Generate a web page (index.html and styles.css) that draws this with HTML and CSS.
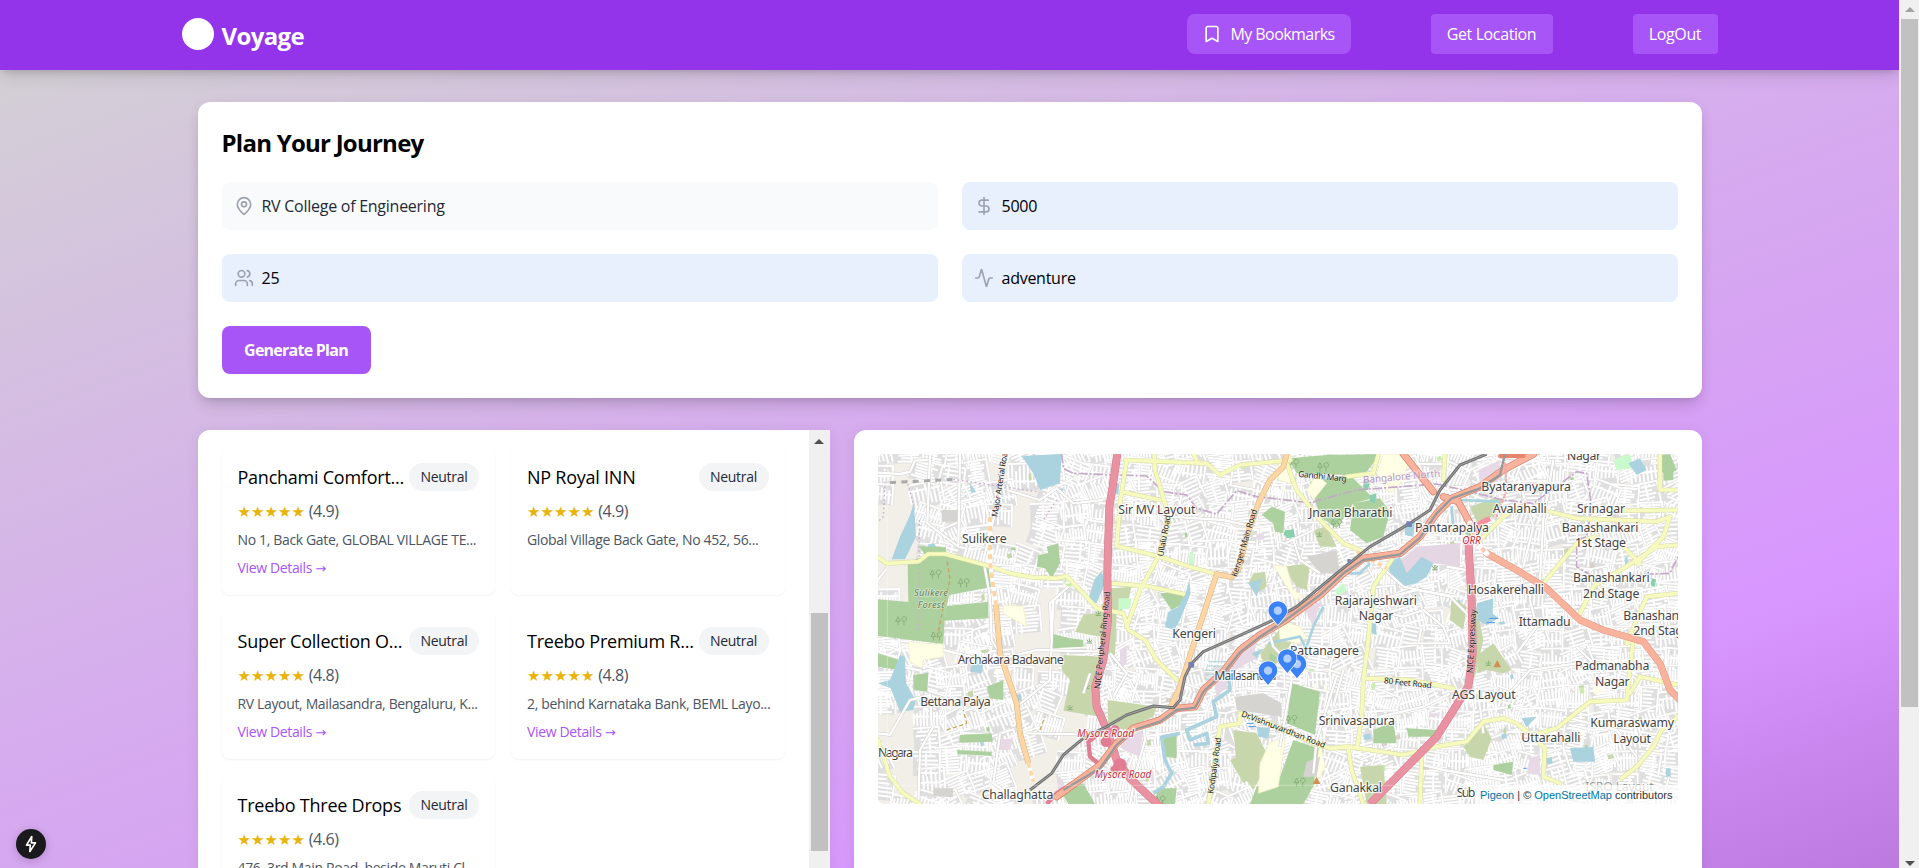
FILE: index.html
```html
<!DOCTYPE html>
<html lang="en">
<head>
<meta charset="utf-8">
<title>Voyage</title>
<link rel="stylesheet" href="styles.css">
</head>
<body>
<div class="window">
  <div class="page">
    <header class="header">
      <div class="header-inner">
        <div class="brand"><span class="brand-dot"></span><span class="brand-name">Voyage</span></div>
        <nav class="nav">
          <button class="nav-btn nav-btn-bookmarks">
            <svg class="icon" viewBox="0 0 24 24"><path d="m19 21-7-4-7 4V5a2 2 0 0 1 2-2h10a2 2 0 0 1 2 2z"/></svg>
            <span class="t-bookmarks">My Bookmarks</span>
          </button>
          <button class="nav-btn nav-btn-location">Get Location</button>
          <button class="nav-btn nav-btn-logout">LogOut</button>
        </nav>
      </div>
    </header>
    <main class="main">
      <section class="card planner">
        <h2 class="planner-title">Plan Your Journey</h2>
        <div class="fields">
          <div class="field field-plain">
            <svg class="icon" viewBox="0 0 24 24"><path d="M20 10c0 4.993-5.539 10.193-7.399 11.799a1 1 0 0 1-1.202 0C9.539 20.193 4 14.993 4 10a8 8 0 0 1 16 0"/><circle cx="12" cy="10" r="3"/></svg>
            <span>RV College of Engineering</span>
          </div>
          <div class="field">
            <svg class="icon" viewBox="0 0 24 24"><path d="M12 2v20M17 5H9.5a3.5 3.5 0 0 0 0 7h5a3.5 3.5 0 0 1 0 7H6"/></svg>
            <span>5000</span>
          </div>
          <div class="field">
            <svg class="icon" viewBox="0 0 24 24"><path d="M16 21v-2a4 4 0 0 0-4-4H6a4 4 0 0 0-4 4v2"/><circle cx="9" cy="7" r="4"/><path d="M22 21v-2a4 4 0 0 0-3-3.87M16 3.13a4 4 0 0 1 0 7.75"/></svg>
            <span>25</span>
          </div>
          <div class="field">
            <svg class="icon" viewBox="0 0 24 24"><path d="M22 12h-2.48a2 2 0 0 0-1.93 1.46l-2.35 8.36a.25.25 0 0 1-.48 0L9.24 2.18a.25.25 0 0 0-.48 0l-2.35 8.36A2 2 0 0 1 4.49 12H2"/></svg>
            <span>adventure</span>
          </div>
        </div>
        <button class="generate">Generate Plan</button>
      </section>

      <div class="results">
        <section class="places-panel">
          <div class="places">
            <article class="place">
              <div class="place-head"><h3>Panchami Comfort...</h3><span class="badge">Neutral</span></div>
              <p class="rating"><span class="stars">★★★★★</span> (4.9)</p>
              <p class="address">No 1, Back Gate, GLOBAL VILLAGE TE...</p>
              <a class="details">View Details <span class="go">→</span></a>
            </article>
            <article class="place">
              <div class="place-head"><h3>NP Royal INN</h3><span class="badge">Neutral</span></div>
              <p class="rating"><span class="stars">★★★★★</span> (4.9)</p>
              <p class="address">Global Village Back Gate, No 452, 56...</p>
            </article>
            <article class="place">
              <div class="place-head"><h3>Super Collection O...</h3><span class="badge">Neutral</span></div>
              <p class="rating"><span class="stars">★★★★★</span> (4.8)</p>
              <p class="address">RV Layout, Mailasandra, Bengaluru, K...</p>
              <a class="details">View Details <span class="go">→</span></a>
            </article>
            <article class="place">
              <div class="place-head"><h3>Treebo Premium R...</h3><span class="badge">Neutral</span></div>
              <p class="rating"><span class="stars">★★★★★</span> (4.8)</p>
              <p class="address">2, behind Karnataka Bank, BEML Layo...</p>
              <a class="details">View Details <span class="go">→</span></a>
            </article>
            <article class="place">
              <div class="place-head"><h3>Treebo Three Drops</h3><span class="badge">Neutral</span></div>
              <p class="rating"><span class="stars">★★★★★</span> (4.6)</p>
              <p class="address">476, 3rd Main Road, beside Maruti Cl...</p>
              <a class="details">View Details <span class="go">→</span></a>
            </article>
          </div>
          <div class="scrollbar scrollbar-inner">
            <span class="arrow arrow-up"></span><span class="thumb thumb-inner"></span>
          </div>
        </section>

        <section class="map-panel">
          <div class="map">
            <svg class="map-svg" viewBox="24 42 2400 1050">
              <rect x="24" y="42" width="2400" height="1050" fill="#f2efe9"/>
              <g id="blocks"></g>

              <!-- scrub and grass -->
              <g fill="#c8d7ab">
                <path d="M725 445L785 440L770 500L735 525L690 505ZM700 515L740 525L735 645L695 640L690 590L615 575L640 525ZM580 645L700 650L670 770L690 830L580 812L600 720L575 690Z"/>
                <path d="M712 780L860 800L850 830L760 870L715 850ZM1090 870L1160 880L1200 960L1150 1050L1100 980ZM1235 560L1275 590L1240 650L1190 700L1170 640Z"/>
                <path d="M1240 380L1320 370L1310 450L1280 440ZM1330 270L1370 260L1400 320L1350 320ZM1800 200L1870 175L1900 180L1870 230L1820 245ZM1745 470L1790 500L1780 570L1740 540Z"/>
                <path d="M1830 640L1870 610L1925 690L1900 700L1850 690L1820 700ZM1820 500L1840 600L1820 690L1805 740ZM1780 920L1840 850L1865 895L1840 960L1800 950ZM1470 980L1540 975L1550 1092L1490 1092Z"/>
                <path d="M1150 400L1185 395L1190 440L1160 460L1135 430ZM1080 960L1130 940L1150 1010L1120 1030Z"/>
              </g>
              <!-- forests and parks -->
              <g fill="#add19e">
                <path d="M147 318L228 322L230 345L370 385L370 440L238 465L225 520L220 612L24 588L24 478L115 486L113 370L165 345Z"/>
                <path d="M230 498L355 485L355 535L220 542ZM24 640L90 660L85 690L24 680ZM130 705L175 698L172 755L130 750ZM540 580L600 595L640 600L640 620L545 625ZM270 885L365 880L368 905L268 908ZM262 930L365 935L365 948L262 942Z"/>
                <path d="M570 1050L640 1030L675 1092L595 1092ZM870 460L940 455L940 490L905 510ZM880 890L920 885L920 955L885 950ZM350 740L400 720L400 780L360 775ZM530 320L565 310L570 370L545 415L525 385L500 380L505 345L535 340Z"/>
                <path d="M1175 225L1205 200L1245 215L1240 280L1215 275L1210 250ZM1255 55L1370 45L1530 42L1490 95L1430 105L1280 100ZM1320 125L1440 105L1510 175L1450 190L1400 265L1350 230ZM1450 190L1530 175L1560 215L1540 290L1490 310L1440 270Z"/>
                <path d="M1265 730L1350 755L1335 885L1250 850ZM1160 1040L1230 1010L1270 900L1360 930L1340 1020L1300 1092L1140 1092ZM1510 870L1570 845L1580 910L1510 910ZM1610 865L1705 870L1705 890L1615 890ZM1870 975L1930 965L1925 1005L1870 990ZM860 1045L920 1045L915 1092L860 1092ZM1200 640L1220 650L1210 700L1195 680Z"/>
                <path d="M2368 45L2400 42L2420 90L2390 110L2370 90ZM2380 90L2410 90L2410 120L2380 122Z"/>
              </g>
              <g fill="#c8facc">
                <path d="M745 475L785 475L780 505L745 510ZM2230 60L2280 42L2290 85L2240 90ZM960 335L970 335L970 375L955 370ZM2345 420L2355 420L2355 440L2345 440ZM1395 450L1420 430L1430 450L1400 470Z"/>
              </g>
              <g fill="#88cfae">
                <path d="M1245 280L1270 265L1275 290L1250 295ZM1480 120L1500 120L1495 150L1480 150ZM1500 165L1520 160L1515 190L1500 185ZM1245 270L1265 270L1265 295L1240 285ZM2345 415L2358 418L2355 440L2342 436Z"/>
              </g>
              <g fill="#ffffe5" stroke="#f1edc0" stroke-width="2">
                <path d="M115 605L175 612L220 612L220 650L160 660L155 685L120 665ZM400 495L460 500L470 560L400 520ZM1225 60L1262 45L1262 130L1225 120ZM1225 540L1290 560L1310 590L1290 610L1230 600ZM1200 905L1245 900L1225 1040L1165 1060L1170 970ZM1350 900L1365 980L1330 1050ZM1210 375L1250 380L1270 450L1300 470L1275 480ZM1370 130L1330 180L1310 150L1340 105ZM1540 42L1620 42L1600 120L1560 160L1520 100Z"/>
              </g>
              <g fill="#d9d0e3">
                <path d="M1640 320L1770 310L1770 380L1690 370L1640 430L1560 410L1580 370Z" fill="#e4d6e3"/>
                <path d="M1825 90L1890 60L1890 120L1830 135ZM1090 650L1130 620L1160 600L1150 660L1080 700ZM1030 720L1070 700L1070 740L1040 770ZM380 900L430 895L420 930L380 930ZM740 900L820 870L810 950L760 930ZM1980 955L2010 945L2010 1005L1970 1000ZM1300 500L1350 490L1330 560ZM750 630L770 615L770 670L750 690Z" fill="#e8d9e6"/>
                <path d="M1095 770L1180 760L1235 790L1235 830L1100 810ZM1310 965L1350 950L1340 1010L1300 1010ZM190 1045L250 1045L248 1072L190 1068ZM1310 350L1400 330L1410 400L1350 400ZM215 210L270 210L270 245L215 245Z" fill="#d6d4d0"/>
              </g>
              <!-- water -->
              <g fill="#aad3df">
                <path d="M455 48L575 42L570 130L510 150L490 100ZM132 190L138 290L105 358L65 358L90 290L118 230ZM90 645L105 650L108 730L137 780L130 810L90 815L62 745L24 730L60 720ZM695 392L705 430L680 490L655 480L672 420ZM958 420L962 460L930 540L912 570L885 560L895 515L925 500L948 455ZM1135 430L1178 415L1160 470ZM305 675L340 670L335 700L300 695ZM300 130L318 155L302 158Z"/>
                <path d="M1820 490L1870 475L1868 520L1885 535L1850 555L1820 540ZM2100 925L2170 920L2175 965L2110 965ZM1955 835L2000 830L1970 862ZM2275 70L2310 55L2330 90L2300 105ZM1605 250L1635 245L1630 290L1605 285ZM1555 370L1590 350L1610 400L1655 350L1690 370L1670 410L1640 430L1595 440L1560 410ZM1160 860L1200 865L1195 895L1165 890ZM1500 550L1518 550L1520 585L1505 580ZM740 130L748 130L745 165L737 160ZM1145 640L1180 625L1160 655ZM2388 985L2402 985L2402 1010L2388 1010Z"/>
              </g>
              <g fill="none" stroke="#aad3df" stroke-width="11" stroke-linejoin="round">
                <path d="M1075 690L1080 750L1030 785L1040 830L950 870L960 900L1010 880L1015 910L970 915M930 880L875 892L885 960L905 1000L880 1040L850 1060"/>
                <path d="M1195 610L1290 590L1310 630M1310 620L1330 560L1360 500M1400 400L1470 400L1500 370M1745 200L1750 260M1770 180L1890 185" stroke-width="8"/>
                <path d="M1015 665H1095M1010 678H1090M1005 691H1080M1005 704H1075M1005 717H1060" stroke-width="3"/>
                <path d="M1858 535H1885M1850 548H1875M1130 850H1150M1135 860H1158M1960 985H1970" stroke="#4c94e8" stroke-width="3"/>
              </g>
              <g id="orchards" fill="none" stroke="#87b078" stroke-width="3"></g>

              <!-- minor connecting roads -->
              <g class="casing"><path id="minor" d="M24 98L90 102L120 95L135 62L175 60M270 42L265 320M180 45L172 250L265 320M375 220L340 360L360 470L365 600L390 640M410 150L510 180L560 145L610 190L700 180M24 420L50 385M220 630L300 650L380 660L500 630L700 635M24 880L60 885L120 780L180 765L185 860M145 1092L150 930L190 860M440 800L540 720L550 480M390 880L370 1030L460 1092M470 880L720 885M820 850L825 900L800 990L780 1092M640 760L660 700M545 600L540 490L595 440M720 640L770 700L730 770M900 230L1060 240L1150 260M1180 520L1210 620L1230 640M1245 310L1330 270L1330 250M1270 300L1290 360L1350 400M1500 330L1545 390L1600 440L1740 470L1790 520M1480 500L1600 530L1660 510L1720 560L1740 610L1620 610M1560 470L1640 450L1760 470M1400 710L1340 900L1330 1000M1265 720L1230 920M1390 800L1420 690M1730 380L1790 390L1800 460M1940 640L2000 560L1980 480M1900 780L1980 690L2120 670M2080 830L2240 870L2300 950M1600 960L1720 990L1900 1020M1830 800L1840 880M1950 130L1990 260L1960 380M2050 60L2020 240L2010 420M2120 620L2200 700M1490 840L1660 800L1740 760"/></g>
              <use href="#minor" fill="none" stroke="#fff" stroke-width="7"/>

              <!-- administrative boundary and tracks -->
              <path d="M575 42L580 85L610 100L830 108L880 155L950 165L980 205L1040 222L1100 152L1160 170L1320 188L1460 150L1700 132L1780 150L1900 180L1990 190L2120 95L2150 100L2165 200L2150 290L2120 300L2120 380L2170 410L2400 400L2424 350" fill="none" stroke="#c5a9c9" stroke-width="5" stroke-dasharray="28 6 6 6"/>
              <path d="M45 125L40 230L24 245M110 120L130 190M148 240L145 570M250 118L500 155M560 180L520 240" fill="none" stroke="#c9b0cc" stroke-width="4" stroke-dasharray="5 8"/>
              <path d="M232 365L240 420L220 500L200 600M230 870L290 850L280 810M510 870L525 830" fill="none" stroke="#c9a25d" stroke-width="4" stroke-dasharray="12 8"/>

              <!-- secondary roads -->
              <defs><path id="secondary" d="M24 352L50 370L145 365L175 342L225 342L370 382L420 400L490 412L560 415L590 408L640 460L680 505L760 520L775 570L825 600L860 660L920 720M770 60L750 190L740 318L870 350L960 380L1045 404M765 60L1010 70L1050 105L1110 75L1262 60M852 42L855 90L885 190L895 250L865 350L810 450L770 560M725 430L830 438L940 462M755 155L870 180M1250 70L1280 150L1350 240L1420 310L1480 335M970 42L980 60M1015 1092L1050 860L1110 850L1110 820M1110 820L1200 850L1330 910L1380 925L1435 920L1600 945L1700 920L1790 905L1840 845L1900 835L1940 850L1990 890L2025 925L2020 1010L2070 1030M1435 925L1445 990L1480 1092M1655 950L1650 1092M1990 885L2060 865L2160 785L2270 780L2290 600L2270 610M1565 360L1510 440L1495 600L1480 720L1475 830L1462 920M1490 715L1620 720L1750 745M2020 430L2120 310L2175 290M2130 520L2170 440L2300 360L2360 320L2424 315M2040 215L2120 235L2360 245L2400 230M2260 212L2424 210M2310 370L2260 320M2370 42L2370 150L2424 150M2400 230L2380 290L2300 370M2270 610L2330 470L2424 460M2280 760L2310 710L2424 735M2375 870L2350 920L2300 980L2255 1015M2375 870L2424 830M1525 42L1510 100L1430 110M1725 42L1720 120M24 900L60 1010L100 1060L150 1092M1830 300L1900 230L1950 200"/></defs>
              <g fill="none" stroke-linejoin="round" stroke-linecap="round">
                <use href="#secondary" stroke="#d6dba0" stroke-width="14"/>
                <use href="#secondary" stroke="#f7fabf" stroke-width="11"/>
              </g>
              <path d="M360 230L360 370L378 495" fill="none" stroke="#fff" stroke-width="13"/>
              <path d="M360 230L360 370L378 495" fill="none" stroke="#fcd6a4" stroke-width="12" stroke-dasharray="16 12"/>
              <g fill="none" stroke-linejoin="round">
                <path d="M378 495L390 640L440 790L450 880L475 970M1250 42L1240 80L1200 120L1165 190L1130 290L1105 390L1085 412L1040 402L985 570L930 740L900 805" stroke="#d9b27c" stroke-width="17"/>
                <path d="M378 495L390 640L440 790L450 880L475 970M1250 42L1240 80L1200 120L1165 190L1130 290L1105 390L1085 412L1040 402L985 570L930 740L900 805" stroke="#fcd6a4" stroke-width="14"/>
                <path d="M475 970L490 1025M1460 335L1550 385" stroke="#fff" stroke-width="12"/>
                <path d="M475 970L490 1025M1460 335L1550 385" stroke="#fcd6a4" stroke-width="11" stroke-dasharray="14 10"/>
              </g>

              <!-- motorways -->
              <g fill="none" stroke-linejoin="round">
                <path d="M742 42L728 140L718 200L712 400L714 540L700 660L676 740L680 800L715 880L740 960L780 1015L870 1100M1795 300L1805 480L1808 640L1795 740L1700 890L1500 1092" stroke="#d97a8d" stroke-width="24"/>
                <path d="M742 42L728 140L718 200L712 400L714 540L700 660L676 740L680 800L715 880L740 960L780 1015L870 1100M1795 300L1805 480L1808 640L1795 740L1700 890L1500 1092" stroke="#e892a2" stroke-width="21"/>
                <path d="M700 870L655 905L660 950L690 975L740 910M530 1092L560 1060L700 970" stroke="#e07d92" stroke-width="13"/>
                <path d="M1795 310L1830 250L1860 235" stroke="#f3909c" stroke-width="16"/>
              </g>
              <g fill="#e27c92"><circle cx="708" cy="905" r="16"/><circle cx="750" cy="975" r="20"/><circle cx="735" cy="870" r="14"/><circle cx="735" cy="990" r="14"/></g>

              <!-- trunk roads -->
              <g fill="none" stroke-linejoin="round" stroke-linecap="round">
                <path d="M560 1070L690 975L740 910L790 865L870 840L920 805L975 800L1000 750L1060 695L1110 630L1170 585L1240 545L1350 465L1420 400L1480 355L1590 340L1650 290L1700 220L1745 175L1830 140L1900 90L1990 42M1600 42L1690 155M1720 170L1765 185L1800 250" stroke="#d4806a" stroke-width="22"/>
                <path d="M1850 340L1940 390L2030 445L2130 540L2200 570L2320 605L2370 670L2400 750L2440 790" stroke="#e2957f" stroke-width="21"/>
                <path d="M560 1070L690 975L740 910L790 865L870 840L920 805L975 800L1000 750L1060 695L1110 630L1170 585L1240 545L1350 465L1420 400L1480 355L1590 340L1650 290L1700 220L1745 175L1830 140L1900 90L1990 42M1600 42L1690 155M1720 170L1765 185L1800 250M1850 340L1940 390L2030 445L2130 540L2200 570L2320 605L2370 670L2400 750L2440 790" stroke="#f9b29c" stroke-width="18"/>
                <path d="M1800 250L1820 310L1850 340" stroke="#fff" stroke-width="16"/>
                <path d="M1800 250L1820 310L1850 340" stroke="#fcc9b8" stroke-width="12" stroke-dasharray="14 14" stroke-linecap="butt"/>
                <path d="M1905 70L1910 150L1880 230" stroke="#f6a9a9" stroke-width="6" stroke-dasharray="8 8"/>
                <path d="M1890 48L1960 48" stroke="#e5866c" stroke-width="12"/>
              </g>
              <!-- railways -->
              <g fill="none" stroke-linejoin="round">
                <path d="M580 1050L690 985L740 915L790 870L870 845L920 810L975 803L1000 755L1060 700L1110 637L1170 590L1240 545L1350 465L1420 400L1480 360L1590 343L1650 293L1700 220L1745 175L1830 145L1890 105L1905 42" stroke="#999" stroke-width="7"/>
                <path d="M480 1050L545 1000L580 945L640 895L710 860L770 825L850 798L910 803L930 780L945 710L965 670L1000 635L1090 595L1200 545L1280 500L1400 400L1500 320L1620 250L1680 210L1710 150L1770 75L1850 42" stroke="#707070" stroke-width="9"/>
                <path d="M480 1050L545 1000L580 945L640 895L710 860L770 825L850 798L910 803L930 780L945 710L965 670L1000 635L1090 595L1200 545L1280 500L1400 400L1500 320L1620 250L1680 210L1710 150L1770 75L1850 42" stroke="#a5a5a5" stroke-width="3"/>
                <path d="M60 128L250 118" stroke="#aaa" stroke-width="9" stroke-dasharray="18 16"/>
              </g>
              <g fill="#7981b0"><rect x="955" y="666" width="17" height="17"/><rect x="1609" y="244" width="17" height="17"/><rect x="1432" y="357" width="10" height="10"/></g>
              <g fill="#d08f55"><path d="M1870 682L1882 660L1893 682ZM1328 1032L1340 1010L1351 1032Z"/></g>

              <!-- place names -->
              <g class="lbl">
                <text x="276" y="310" textLength="134">Sulikere</text>
                <text x="745" y="221" textLength="231">Sir MV Layout</text>
                <text x="263" y="671" textLength="318">Archakara Badavane</text>
                <text x="151" y="798" textLength="211">Bettana Palya</text>
                <text x="24" y="950" textLength="105">Nagara</text>
                <text x="335" y="1076" textLength="215">Challaghatta</text>
                <text x="907" y="594" textLength="131">Kengeri</text>
                <text x="1033" y="720" textLength="186">Mailasandra</text>
                <text x="1317" y="230" textLength="250">Jnana Bharathi</text>
                <text x="1635" y="276" textLength="222">Pantarapalya</text>
                <text x="1834" y="152" textLength="269">Byataranyapura</text>
                <text x="1868" y="220" textLength="162">Avalahalli</text>
                <text x="2121" y="219" textLength="144">Srinagar</text>
                <text x="2091" y="60" textLength="102">Nagar</text>
                <text x="2075" y="276" textLength="230">Banashankari</text>
                <text x="2115" y="322" textLength="153">1st Stage</text>
                <text x="2109" y="427" textLength="230">Banashankari</text>
                <text x="2139" y="473" textLength="169">2nd Stage</text>
                <text x="2260" y="540" textLength="230">Banashankari</text>
                <text x="2290" y="586" textLength="169">2nd Stage</text>
                <text x="1394" y="494" textLength="247">Rajarajeshwari</text>
                <text x="1466" y="540" textLength="104">Nagar</text>
                <text x="1793" y="463" textLength="229">Hosakerehalli</text>
                <text x="1946" y="557" textLength="156">Ittamadu</text>
                <text x="1260" y="646" textLength="207">Pattanagere</text>
                <text x="2115" y="691" textLength="223">Padmanabha</text>
                <text x="2175" y="737" textLength="104">Nagar</text>
                <text x="1746" y="777" textLength="191">AGS Layout</text>
                <text x="1346" y="856" textLength="229">Srinivasapura</text>
                <text x="1954" y="906" textLength="177">Uttarahalli</text>
                <text x="2161" y="862" textLength="251">Kumaraswamy</text>
                <text x="2230" y="908" textLength="113">Layout</text>
                <text x="1380" y="1056" textLength="156">Ganakkal</text>
                <text x="1760" y="1070" textLength="56">Sub</text>
                <text x="2146" y="1052" textLength="205" class="faint">ISRO Layout</text>
              </g>
              <g class="lbl forest"><text x="132" y="467" textLength="102">Sulikere</text><text x="143" y="503" textLength="80">Forest</text></g>
              <g class="lbl red">
                <text x="622" y="891" textLength="170">Mysore Road</text><text x="674" y="1015" textLength="170">Mysore Road</text><text x="1777" y="312" textLength="55">ORR</text>
              </g>
              <g class="lbl road">
                <text transform="translate(382 232) rotate(-81)" textLength="210">Major Arterial Road</text>
                <text transform="translate(690 748) rotate(-84)" textLength="294">NICE Peripheral Ring Road</text>
                <text transform="translate(880 350) rotate(-80)" textLength="125">Ullalu Road</text>
                <text transform="translate(1100 412) rotate(-73)" textLength="210">Kengeri Main Road</text>
                <text transform="translate(1030 1062) rotate(-82)" textLength="170">Kodipalya Road</text>
                <text transform="translate(1112 828) rotate(21)" textLength="268">Dr.Vishnuvardhan Road</text>
                <text transform="translate(1284 110) rotate(6)" textLength="146">Gandhi Marg</text>
                <text transform="translate(1541 730) rotate(6)" textLength="144">80 Feet Road</text>
                <text transform="translate(1808 700) rotate(-87)" textLength="192">NICE Expressway</text>
              </g>
              <text class="lbl region" transform="translate(1480 130) rotate(-5)" textLength="232">Bangalore North</text>
              <g fill="none" stroke="#fff" stroke-opacity=".45" stroke-width="2"><path d="M52 42V1092M24 1036H2424"/></g>

              <!-- markers -->
              <defs><g id="pin"><path d="M0 42L-20 18A28 28 0 1 1 20 18Z" fill="#3b82f6" stroke="#fff" stroke-width="4" paint-order="stroke"/><circle cx="0" cy="-1" r="12.500" fill="#b3cffb"/></g></defs>
              <use href="#pin" x="1281" y="673"/>
              <use href="#pin" x="1252" y="657"/>
              <use href="#pin" x="1194" y="693"/>
              <use href="#pin" x="1223.500" y="513"/>
            </svg>
            <div class="attribution"><span class="link">Pigeon</span> | © <span class="link">OpenStreetMap</span> contributors</div>
          </div>
        </section>
      </div>
    </main>
    <div class="dev-badge">
      <svg viewBox="0 0 24 24"><path d="M13 2L6 13.500H11L10.500 22L18 10.500H12.500Z"/></svg>
    </div>
  </div>
  <div class="scrollbar scrollbar-page">
    <span class="arrow arrow-up arrow-dim"></span><span class="thumb thumb-page"></span><span class="arrow arrow-down"></span>
  </div>
</div>
<script src="streets.js"></script>
</body>
</html>
```
FILE: styles.css
```css
* { box-sizing: border-box; margin: 0; padding: 0; }
body {
  font-family: "Segoe UI", "Open Sans", "Noto Sans", sans-serif;
  font-size: 16px;
  line-height: 24px;
  letter-spacing: -0.3px;
  color: #000;
  overflow: hidden;
}
button { font: inherit; letter-spacing: inherit; border: 0; white-space: nowrap; }
.window { display: flex; width: 1919px; height: 868px; overflow: hidden; }
.page {
  flex: 1;
  position: relative;
  overflow: hidden;
  background-image: linear-gradient(160deg, #d3d3d3 0%, #d6acee 43%, #d6a3f3 56%, #d896ff 72%, #ac6acd 100%);
  background-size: 100% 1047px;
}
.icon { width: 20px; height: 20px; fill: none; stroke: currentColor; stroke-width: 2; stroke-linecap: round; stroke-linejoin: round; flex: none; }

.header {
  height: 70px;
  background: #9333ea;
  color: #fff;
  position: relative;
  box-shadow: 0 10px 15px -3px rgba(0,0,0,.1), 0 4px 6px -4px rgba(0,0,0,.1), 0 2px 8px rgba(0,0,0,.08);
}
.header-inner { width: 1536px; height: 68px; margin: 0 auto; display: flex; justify-content: space-between; align-items: center; }
.brand { display: flex; align-items: center; gap: 8px; }
.brand-dot { width: 32px; height: 32px; border-radius: 50%; background: #fff; }
.brand-name { font-size: 24px; line-height: 32px; font-weight: 700; padding-top: 3px; letter-spacing: -.65px; }
.nav { display: flex; gap: 80px; }
.nav-btn { height: 40px; background: #a855f7; color: #fff; border-radius: 4px; display: flex; align-items: center; justify-content: center; letter-spacing: -.38px; }
.nav-btn-bookmarks { width: 164px; border-radius: 8px; gap: 8px; letter-spacing: -.55px; }
.nav-btn-location { width: 122px; }
.nav-btn-logout { width: 85px; }

.main { width: 1504px; margin: 32px auto 0; }
.card { background: #fff; border-radius: 12px; }
.planner { padding: 24px; height: 296px; box-shadow: 0 10px 15px -3px rgba(0,0,0,.12), 0 4px 6px -4px rgba(0,0,0,.12), 0 2px 14px rgba(0,0,0,.05); }
.planner-title { font-size: 24px; line-height: 34px; font-weight: 700; margin-bottom: 22px; letter-spacing: -.75px; }
.fields { display: grid; grid-template-columns: 1fr 1fr; gap: 24px; }
.field { height: 48px; border-radius: 8px; background: #e8f0fe; padding: 0 12px; display: flex; align-items: center; gap: 8px; letter-spacing: -.26px; }
.field-plain { background: #f9fafb; color: #1f2937; }
.field .icon { color: #9ca3af; }
.generate { margin-top: 24px; width: 149px; height: 48px; background: #a855f7; color: #fff; border-radius: 8px; font-weight: 700; letter-spacing: -.75px; }

.results { display: grid; grid-template-columns: 632px 848px; gap: 24px; margin-top: 32px; height: 600px; }
.places-panel { display: flex; background: #fff; border-radius: 12px 0 0 12px; overflow: hidden; box-shadow: 0 2px 14px rgba(0,0,0,.07); }
.places { width: 611px; padding: 17px 24px; display: grid; grid-template-columns: 1fr 1fr; grid-auto-rows: 148px; gap: 16px; align-content: start; }
.place { padding: 16px; border-radius: 8px; box-shadow: 0 1px 2px rgba(0,0,0,.06); display: flex; flex-direction: column; gap: 8px; white-space: nowrap; min-width: 0; }
.place-head { display: flex; justify-content: space-between; align-items: center; height: 28px; }
.place h3 { font-size: 18px; line-height: 28px; font-weight: 500; letter-spacing: -.24px; }
.badge { width: 70px; height: 28px; border-radius: 14px; background: #f3f4f6; color: #1f2937; font-size: 14px; line-height: 28px; text-align: center; }
.rating { height: 24px; color: #4b5563; letter-spacing: -.45px; }
.stars { font-family: "DejaVu Sans", sans-serif; font-size: 15px; letter-spacing: .05px; color: #eab308; }
.address, .details { font-size: 14px; line-height: 18px; height: 20px; color: #4b5563; letter-spacing: -.35px; }
.details { color: #a855f7; }
.go { font: 13px/18px "DejaVu Sans", sans-serif; }

.map-panel { background: #fff; border-radius: 12px; padding: 24px; box-shadow: 0 2px 14px rgba(0,0,0,.07); }
.map { width: 800px; height: 350px; border-radius: 6px; overflow: hidden; position: relative; }
.map-svg { display: block; width: 800px; height: 350px; }
.casing { fill: none; stroke: #cfcdca; stroke-width: 10; }
.lbl { font-family: "Noto Sans", sans-serif; font-size: 37px; letter-spacing: 0; fill: #444; stroke: #fff; stroke-opacity: .75; stroke-width: 7; paint-order: stroke; stroke-linejoin: round; }
.faint { opacity: .5; }
.forest { font-size: 28px; font-style: italic; fill: #5f7d59; stroke-opacity: .5; stroke-width: 4; }
.red { font-size: 30px; font-style: italic; fill: #c0303f; }
.road { font-size: 25px; fill: #222; stroke-width: 3; stroke-opacity: .4; }
.region { font-size: 30px; fill: #b793bb; stroke-opacity: .4; }
.attribution {
  position: absolute; right: 0; bottom: 0; height: 19px; padding: 3px 5px 0;
  background: rgba(255,255,255,.7); font: 11px/14px "Liberation Sans", Arial, sans-serif; letter-spacing: 0; color: #333; white-space: nowrap;
}
.link { color: #0078a8; }

.scrollbar { background: #f0f0f0; display: flex; flex-direction: column; align-items: center; flex: none; }
.scrollbar-inner { width: 21px; padding: 9px 0 0; }
.scrollbar-page { width: 20px; height: 868px; padding: 7px 0 2px 1px; }
.arrow { width: 0; height: 0; border-left: 5px solid transparent; border-right: 5px solid transparent; }
.arrow-up { border-bottom: 5px solid #505050; }
.arrow-dim { border-bottom-color: #a3a3a3; }
.arrow-down { border-top: 5px solid #505050; margin-top: auto; }
.thumb { width: 17px; background: #c1c1c1; }
.thumb-inner { height: 238px; margin-top: 169px; }
.thumb-page { height: 688px; margin-top: 7px; }

.dev-badge { position: absolute; left: 16px; top: 829px; width: 30px; height: 30px; border-radius: 50%; background: #1a1a1c; display: flex; align-items: center; justify-content: center; box-shadow: 0 2px 10px rgba(0,0,0,.18); }
.dev-badge svg { width: 18px; height: 18px; fill: none; stroke: #fff; stroke-width: 2.200; stroke-linejoin: round; }
```
FILE: streets.js
```js
// Fills the map's built-up areas with small street grids.
const NS = "http://www.w3.org/2000/svg";
let seed = 4211;
const rnd = () => (seed = (seed * 16807) % 2147483647) / 2147483647;
const add = (parent, tag, attrs) => {
  const el = document.createElementNS(NS, tag);
  for (const k in attrs) el.setAttribute(k, attrs[k]);
  parent.appendChild(el);
};

const blocks = document.getElementById("blocks");
// Open countryside, kept free of dense streets: [x0, y0, x1, y1]
const rural = [[24, 42, 150, 480], [390, 90, 480, 330], [440, 560, 560, 700], [200, 600, 290, 760], [440, 900, 560, 1092], [480, 420, 560, 560], [24, 800, 120, 1092], [560, 680, 660, 1000]];
const isRural = (x, y) => rural.some(r => x > r[0] && x < r[2] && y > r[1] && y < r[3]);

let fillD = "", thin = "", wide = "";
for (let cy = 30; cy < 1130; cy += 62) {
  for (let cx = 20; cx < 2460; cx += 72) {
    const x = cx + rnd() * 24, y = cy + rnd() * 20;
    const a = (rnd() < 0.5 ? 0.12 : -0.2) + (rnd() - 0.5) * 0.6;
    const c = Math.cos(a), s = Math.sin(a);
    const sparse = isRural(x, y);
    if (sparse && rnd() < 0.75) continue;
    const w = 34 + rnd() * 16, h = 30 + rnd() * 12;
    const p = (u, v) => (x + u * c - v * s).toFixed(0) + " " + (y + u * s + v * c).toFixed(0);
    fillD += `M${p(-w, -h)}L${p(w, -h)}L${p(w, h)}L${p(-w, h)}Z`;
    const vertical = rnd() < 0.5;
    const step = 8 + rnd() * 5;
    const along = vertical ? h : w, across = vertical ? w : h;
    for (let t = -across; t <= across; t += step) {
      const e0 = -along * (0.4 + rnd() * 0.6), e1 = along * (0.4 + rnd() * 0.6);
      thin += vertical ? `M${p(t, e0)}L${p(t, e1)}` : `M${p(e0, t)}L${p(e1, t)}`;
    }
    const m = (rnd() - 0.5) * along;
    thin += vertical ? `M${p(-w, m)}L${p(w, m)}` : `M${p(m, -h)}L${p(m, h)}`;
    wide += `M${p(-w, -h)}L${p(w, -h)}L${p(w, h)}`;
  }
}
add(blocks, "path", { d: fillD, fill: "#e0dfdf" });
add(blocks, "path", { d: thin, fill: "none", stroke: "#fff", "stroke-width": 6 });
add(blocks, "path", { d: wide, fill: "none", stroke: "#d8d6d4", "stroke-width": 8 });
add(blocks, "path", { d: wide, fill: "none", stroke: "#fff", "stroke-width": 6 });

// Scattered gardens, ponds and institutional plots
const tints = ["#c8d7ab", "#add19e", "#aad3df", "#e8d9e6", "#ffffe5", "#cdebb0", "#d9d0c9"];
for (let i = 0; i < 80; i++) {
  const x = 40 + rnd() * 2360, y = 50 + rnd() * 1030, w = 6 + rnd() * 16, h = 6 + rnd() * 16;
  add(blocks, "path", {
    d: `M${x} ${y}l${w} ${-h * 0.3}l${w * 0.2} ${h}l${-w} ${h * 0.2}Z`,
    fill: tints[Math.floor(rnd() * tints.length)]
  });
}

// Tree symbols inside the woods
let trees = "";
for (const [x, y] of [[187, 402], [272, 428], [84, 542], [190, 588], [1260, 70], [1350, 80], [1390, 250], [1255, 838], [1280, 1026], [860, 1080]]) {
  trees += `M${x} ${y + 14}v-12l-7 0l7 -14l7 14h-7M${x + 18} ${y + 14}v-12a7 7 0 1 1 1 0`;
}
for (const [x, y] of [[685, 522], [658, 605], [650, 742], [600, 805], [1348, 285], [1695, 385], [1855, 672]]) {
  trees += `M${x - 8} ${y + 4}h16M${x} ${y + 2}v-12M${x - 2} ${y + 1}l-6 -7M${x + 2} ${y + 1}l6 -7`;
}
add(document.getElementById("orchards"), "path", { d: trees });
```
